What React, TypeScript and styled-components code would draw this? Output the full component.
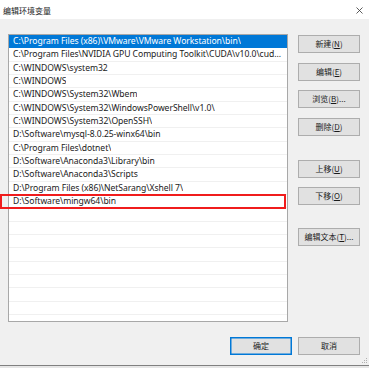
import React from "react";
import styled, { createGlobalStyle } from "styled-components";

const GlobalStyle = createGlobalStyle`
  html, body { margin: 0; padding: 0; background: #f0f0f0; }
  body { font-family: "Noto Sans", "Noto Sans CJK SC", sans-serif; }
  * { box-sizing: border-box; }
`;

const Window = styled.div`
  position: relative;
  width: 369px;
  height: 368px;
  background: #f0f0f0;
  display: flex;
  flex-direction: column;
  overflow: hidden;
`;

const TitleBar = styled.div`
  height: 19px;
  background: #ffffff;
  display: flex;
  align-items: center;
  justify-content: space-between;
  padding: 0 6px 0 3px;
  flex-shrink: 0;
`;

const Title = styled.span`
  font-family: "Noto Sans CJK SC", sans-serif;
  font-size: 8px;
  color: #1a1a1a;
  line-height: 1;
  margin-top: 2px;
`;

const CloseIcon = styled.svg`
  width: 7px;
  height: 7px;
  margin-top: 2px;
`;

const Body = styled.div`
  display: flex;
  padding: 15px 9px 0 8px;
  gap: 10px;
`;

const ListBox = styled.div`
  width: 280px;
  height: 288px;
  border: 1px solid #a8a8a8;
  background: #ffffff;
  overflow: hidden;
`;

const Row = styled.div<{ $selected?: boolean }>`
  height: 13.333px;
  padding: 0 3px 0 4px;
  display: flex;
  align-items: center;
  font-family: "Noto Sans", "Noto Sans CJK SC", sans-serif;
  font-size: 8.6px;
  white-space: nowrap;
  overflow: hidden;
  color: ${(p) => (p.$selected ? "#ffffff" : "#1a1a1a")};
  background: ${(p) => (p.$selected ? "#0078d7" : "#ffffff")};
  border-bottom: 1px solid ${(p) => (p.$selected ? "#0078d7" : "#f0f0f0")};
`;

const RowText = styled.span`
  overflow: hidden;
  text-overflow: ellipsis;
  white-space: nowrap;
  letter-spacing: -0.05px;
`;

const ButtonColumn = styled.div`
  display: flex;
  flex-direction: column;
  padding-top: 1px;
`;

const Button = styled.button<{ $default?: boolean; $gap?: number }>`
  width: 62px;
  height: 18px;
  margin-top: ${(p) => p.$gap ?? 0}px;
  padding: 0;
  background: #e1e1e1;
  border: 1px solid ${(p) => (p.$default ? "#0078d7" : "#adadad")};
  box-shadow: ${(p) => (p.$default ? "inset 0 0 0 0.5px #0078d7" : "none")};
  font-family: "Noto Sans CJK SC", sans-serif;
  font-size: 8px;
  color: #1a1a1a;
  line-height: 1;
  display: flex;
  align-items: center;
  justify-content: center;
`;

const Underline = styled.span`
  text-decoration: underline;
`;

const Footer = styled.div`
  display: flex;
  justify-content: flex-end;
  gap: 6px;
  padding: 15px 9px 0 0;
`;

const BottomEdge = styled.div`
  margin-top: auto;
  height: 3px;
  border-top: 1px solid #808080;
  background: #e6e6e6;
`;

const Annotation = styled.div`
  position: absolute;
  left: 0;
  top: 194px;
  width: 286px;
  height: 15px;
  border: 2px solid #f01c1c;
  pointer-events: none;
`;

const Grip = styled.svg`
  position: absolute;
  right: 1px;
  bottom: 4px;
  width: 6px;
  height: 6px;
`;

const paths = [
  "C:\\Program Files (x86)\\VMware\\VMware Workstation\\bin\\",
  "C:\\Program Files\\NVIDIA GPU Computing Toolkit\\CUDA\\v10.0\\cuda\\libnvvp",
  "C:\\WINDOWS\\system32",
  "C:\\WINDOWS",
  "C:\\WINDOWS\\System32\\Wbem",
  "C:\\WINDOWS\\System32\\WindowsPowerShell\\v1.0\\",
  "C:\\WINDOWS\\System32\\OpenSSH\\",
  "D:\\Software\\mysql-8.0.25-winx64\\bin",
  "C:\\Program Files\\dotnet\\",
  "D:\\Software\\Anaconda3\\Library\\bin",
  "D:\\Software\\Anaconda3\\Scripts",
  "D:\\Program Files (x86)\\NetSarang\\Xshell 7\\",
  "D:\\Software\\mingw64\\bin",
];

const rows = [...paths, ...Array(10).fill("")];

const label = (text: string, key: string, tail = "") => (
  <>
    {text}(<Underline>{key}</Underline>){tail}
  </>
);

export default function App() {
  return (
    <>
      <GlobalStyle />
      <Window>
        <TitleBar>
          <Title>编辑环境变量</Title>
          <CloseIcon viewBox="0 0 7 7">
            <path d="M0.5 0.5 L6.5 6.5 M6.5 0.5 L0.5 6.5" stroke="#333" strokeWidth="0.8" />
          </CloseIcon>
        </TitleBar>
        <Body>
          <ListBox>
            {rows.map((r, i) => (
              <Row key={i} $selected={i === 0}>
                <RowText>{r}</RowText>
              </Row>
            ))}
          </ListBox>
          <ButtonColumn>
            <Button>{label("新建", "N")}</Button>
            <Button $gap={9.5}>{label("编辑", "E")}</Button>
            <Button $gap={9.5}>{label("浏览", "B", "...")}</Button>
            <Button $gap={9.5}>{label("删除", "D")}</Button>
            <Button $gap={24}>{label("上移", "U")}</Button>
            <Button $gap={9.5}>{label("下移", "O")}</Button>
            <Button $gap={23}>{label("编辑文本", "T", "...")}</Button>
          </ButtonColumn>
        </Body>
        <Footer>
          <Button $default>确定</Button>
          <Button>取消</Button>
        </Footer>
        <BottomEdge />
        <Annotation />
        <Grip viewBox="0 0 6 6">
          <rect x="4" y="0" width="1" height="1" fill="#b0b0b0" />
          <rect x="2" y="2" width="1" height="1" fill="#b0b0b0" />
          <rect x="4" y="2" width="1" height="1" fill="#b0b0b0" />
          <rect x="0" y="4" width="1" height="1" fill="#b0b0b0" />
          <rect x="2" y="4" width="1" height="1" fill="#b0b0b0" />
          <rect x="4" y="4" width="1" height="1" fill="#b0b0b0" />
        </Grip>
      </Window>
    </>
  );
}
